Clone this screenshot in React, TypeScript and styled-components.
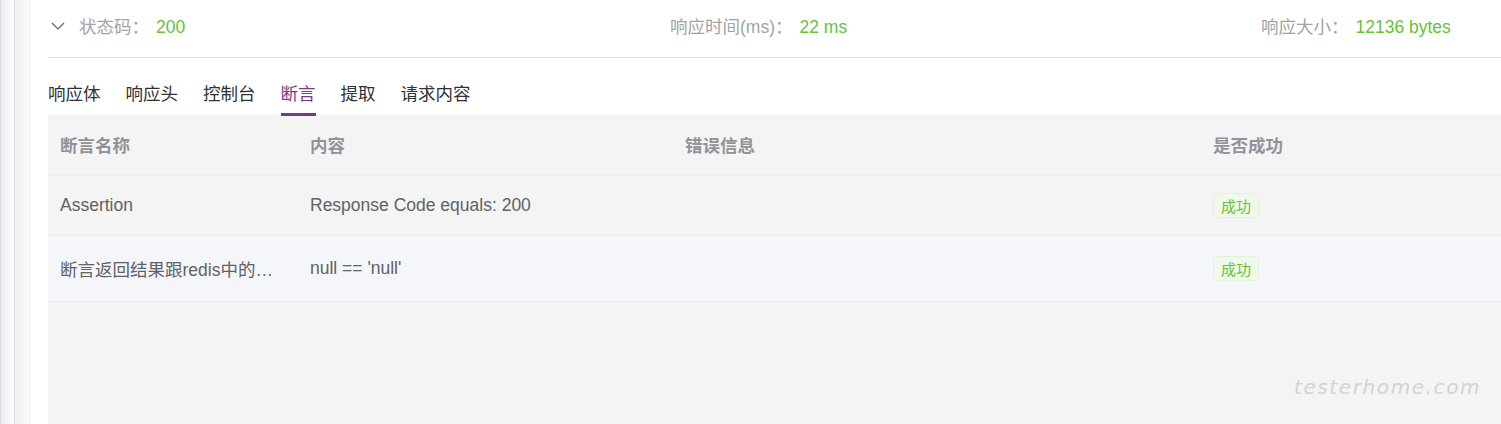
import React from "react";
import styled, { createGlobalStyle } from "styled-components";

const Global = createGlobalStyle`
  html, body { margin: 0; padding: 0; height: 100%; overflow: hidden; background: #ffffff; }
  #root { height: 100%; }
  * { box-sizing: border-box; }
`;

const FONT = `"Liberation Sans", Arial, "Noto Sans CJK SC", sans-serif`;

const Page = styled.div`
  position: relative;
  display: flex;
  height: 424px;
  width: 1501px;
  overflow: hidden;
  font-family: ${FONT};
`;

const Strip = styled.div<{ $edge: string }>`
  flex: 0 0 ${(p) => (p.$edge === "outer" ? "14px" : "15px")};
  border-left: 1px solid ${(p) => (p.$edge === "outer" ? "#d6d9e4" : "#e3e3ea")};
  background: linear-gradient(to right, #efeff1, #fbfbfb);
`;

const Panel = styled.div`
  flex: 1 1 auto;
  min-width: 0;
  border-left: 1px solid #ececf0;
  background: #ffffff;
  padding-left: 18px;
  display: flex;
  flex-direction: column;
  overflow: hidden;
`;

const Content = styled.div`
  width: 1804px;
  flex: 1 1 auto;
  display: flex;
  flex-direction: column;
`;

const Summary = styled.div`
  display: flex;
  align-items: center;
  height: 58px;
  border-bottom: 1px solid #dcdfe6;
  padding-bottom: 6px;
`;

const Toggle = styled.div`
  flex: 0 0 31px;
  display: flex;
  align-items: center;
  padding-left: 3px;
`;

const SummaryGrid = styled.div`
  display: grid;
  grid-template-columns: repeat(3, 591px);
`;

const Stat = styled.div`
  font-size: 17.5px;
  white-space: nowrap;
`;

const StatLabel = styled.span`
  color: #a3a3a3;
  margin-right: 7px;
`;

const StatValue = styled.span`
  color: #67c23a;
`;

const Tabs = styled.div`
  display: flex;
  gap: 25px;
  height: 57px;
`;

const Tab = styled.div<{ $active?: boolean }>`
  position: relative;
  display: flex;
  align-items: center;
  padding-top: 12px;
  font-size: 17.5px;
  color: ${(p) => (p.$active ? "#783887" : "#303133")};
  &::after {
    content: "";
    position: absolute;
    left: 0;
    right: 0;
    bottom: -1px;
    height: 3px;
    background: ${(p) => (p.$active ? "#783887" : "transparent")};
  }
`;

const TableArea = styled.div`
  flex: 1 1 auto;
  background: #f4f4f4;
`;

const Table = styled.table`
  width: 100%;
  table-layout: fixed;
  border-collapse: collapse;
  font-size: 17.5px;
`;

const HeadRow = styled.tr`
  height: 60px;
  border-bottom: 1px solid #ebeef5;
`;

const Th = styled.th`
  text-align: left;
  padding: 0 12px;
  font-weight: bold;
  color: #909399;
`;

const Row = styled.tr<{ $striped?: boolean; $h: number }>`
  height: ${(p) => p.$h}px;
  background: ${(p) => (p.$striped ? "#f5f6fa" : "transparent")};
  border-bottom: 1px solid #ebeef5;
`;

const Td = styled.td`
  padding: 0 12px;
  color: #606266;
  white-space: nowrap;
  overflow: hidden;
  text-overflow: ellipsis;
`;

const Tag = styled.span`
  display: inline-flex;
  align-items: center;
  height: 25px;
  padding: 0 7px;
  font-size: 15px;
  color: #67c23a;
  background: #f0f9eb;
  border: 1px solid #e1f3d8;
  border-radius: 5px;
`;

const Watermark = styled.div`
  position: absolute;
  left: 1294px;
  top: 375px;
  font-family: "DejaVu Sans", sans-serif;
  font-weight: 200;
  font-style: italic;
  font-size: 20px;
  letter-spacing: 1.6px;
  color: #d3d3d3;
  pointer-events: none;
`;

const Chevron = () => (
  <svg width="14" height="8" viewBox="0 0 14 8" fill="none">
    <path d="M1 1 L7 7 L13 1" stroke="#606266" strokeWidth="1.2" />
  </svg>
);

const rows = [
  { name: "Assertion", content: "Response Code equals: 200", error: "", h: 60 },
  { name: "断言返回结果跟redis中的数据一致", content: "null == 'null'", error: "", h: 66 },
];

export default function App() {
  return (
    <>
      <Global />
      <Page>
        <Strip $edge="outer" />
        <Strip $edge="inner" />
        <Panel>
          <Content>
            <Summary>
              <Toggle>
                <Chevron />
              </Toggle>
              <SummaryGrid>
                <Stat>
                  <StatLabel>状态码：</StatLabel>
                  <StatValue>200</StatValue>
                </Stat>
                <Stat>
                  <StatLabel>响应时间(ms)：</StatLabel>
                  <StatValue>22 ms</StatValue>
                </Stat>
                <Stat>
                  <StatLabel>响应大小：</StatLabel>
                  <StatValue>12136 bytes</StatValue>
                </Stat>
              </SummaryGrid>
            </Summary>
            <Tabs>
              <Tab>响应体</Tab>
              <Tab>响应头</Tab>
              <Tab>控制台</Tab>
              <Tab $active>断言</Tab>
              <Tab>提取</Tab>
              <Tab>请求内容</Tab>
            </Tabs>
            <TableArea>
              <Table>
                <colgroup>
                  <col style={{ width: 250 }} />
                  <col style={{ width: 375 }} />
                  <col style={{ width: 528 }} />
                  <col />
                </colgroup>
                <thead>
                  <HeadRow>
                    <Th>断言名称</Th>
                    <Th>内容</Th>
                    <Th>错误信息</Th>
                    <Th>是否成功</Th>
                  </HeadRow>
                </thead>
                <tbody>
                  {rows.map((r, i) => (
                    <Row key={i} $striped={i % 2 === 1} $h={r.h}>
                      <Td>{r.name}</Td>
                      <Td>{r.content}</Td>
                      <Td>{r.error}</Td>
                      <Td>
                        <Tag>成功</Tag>
                      </Td>
                    </Row>
                  ))}
                </tbody>
              </Table>
            </TableArea>
          </Content>
        </Panel>
        <Watermark>testerhome.com</Watermark>
      </Page>
    </>
  );
}
